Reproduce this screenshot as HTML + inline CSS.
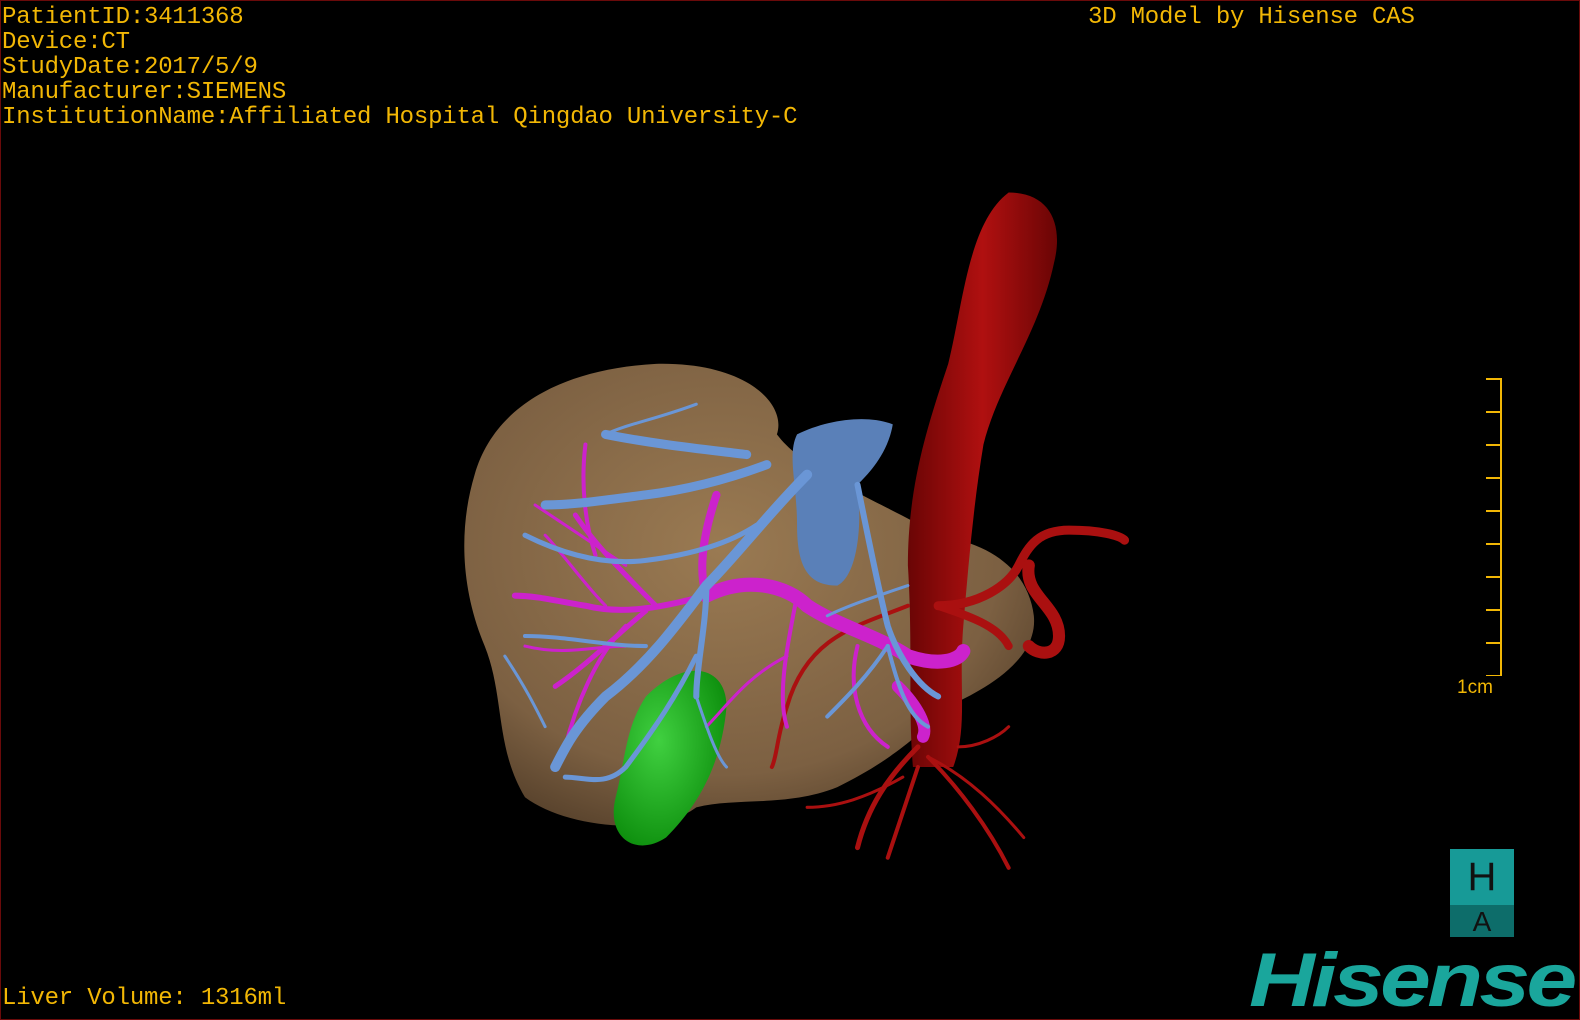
<!DOCTYPE html>
<html><head><meta charset="utf-8"><style>
html,body{margin:0;padding:0;background:#000;}
#f{position:relative;width:1580px;height:1020px;overflow:hidden;background:#000;box-sizing:border-box;border:1px solid #6a0a0a;}
.t{position:absolute;font-family:"Liberation Mono",monospace;font-size:24px;color:#f2b705;white-space:pre;line-height:25px;letter-spacing:-0.2px;}
svg{position:absolute;left:0;top:0;}
</style></head><body><div id="f">
<svg width="1580" height="1020" viewBox="0 0 1568 1012" preserveAspectRatio="none">
<defs>
<radialGradient id="lv" cx="0.45" cy="0.4" r="0.7"><stop offset="0" stop-color="#9a7a52"/><stop offset="0.7" stop-color="#7c6042"/><stop offset="1" stop-color="#4e3a26"/></radialGradient>
<linearGradient id="ao" x1="0" x2="1"><stop offset="0" stop-color="#6a0505"/><stop offset="0.5" stop-color="#b01010"/><stop offset="1" stop-color="#6a0505"/></linearGradient>
<radialGradient id="gb" cx="0.4" cy="0.4" r="0.7"><stop offset="0" stop-color="#40d040"/><stop offset="1" stop-color="#0a8a0a"/></radialGradient>
</defs>
<path d="M470 470 C490 400 560 365 650 360 C740 358 780 400 770 430 C800 470 880 500 930 530 C990 540 1020 570 1025 610 C1030 660 960 690 940 700 C900 740 870 760 830 780 C780 800 730 790 690 800 C650 830 560 820 520 790 C490 740 500 690 480 640 C455 580 455 520 470 470Z" fill="url(#lv)"/>
<path d="M1000 190 C1040 190 1055 220 1045 260 C1030 330 990 380 975 440 C965 500 960 560 955 620 C950 680 960 720 945 760 L905 760 C900 700 905 640 900 560 C900 480 920 420 940 360 C955 300 960 220 1000 190Z" fill="url(#ao)"/>
<g fill="none" stroke="#aa1010" stroke-linecap="round">
<path d="M930 600 C970 600 1000 580 1010 560 C1020 540 1030 525 1060 525 C1090 525 1110 530 1115 535" stroke-width="9"/>
<path d="M1020 560 C1015 590 1050 600 1050 630 C1050 650 1030 650 1020 640" stroke-width="12"/>
<path d="M930 600 C960 610 990 620 1000 640" stroke-width="8"/>
<path d="M910 740 C880 770 860 800 850 840" stroke-width="5"/>
<path d="M910 760 C900 790 890 820 880 850" stroke-width="4"/>
<path d="M920 750 C950 780 980 820 1000 860" stroke-width="4"/>
<path d="M920 750 C960 770 990 800 1015 830" stroke-width="3"/>
<path d="M895 770 C860 790 830 800 800 800" stroke-width="3"/>
<path d="M900 600 C850 620 800 630 780 700 C770 730 770 750 765 760" stroke-width="4"/>
<path d="M950 740 C970 740 990 730 1000 720" stroke-width="3"/>
</g>
<path d="M640 690 C680 650 720 660 720 700 C715 760 690 800 660 830 C630 850 600 830 610 790 C620 750 620 720 640 690Z" fill="url(#gb)"/>
<g fill="none" stroke="#cc22cc" stroke-linecap="round">
<path d="M700 590 C740 570 780 580 800 600 C830 620 870 630 900 650 C930 660 950 655 955 645" stroke-width="14"/>
<path d="M890 680 C910 700 920 720 915 730" stroke-width="12"/>
<path d="M700 590 C660 600 620 610 580 600 C550 595 530 590 510 590" stroke-width="6"/>
<path d="M700 590 C690 560 700 520 710 490" stroke-width="8"/>
<path d="M650 600 C620 570 590 540 570 510" stroke-width="5"/>
<path d="M640 605 C610 630 580 660 550 680" stroke-width="5"/>
<path d="M600 600 C580 580 555 545 540 530" stroke-width="3"/>
<path d="M620 620 C590 650 570 700 560 740" stroke-width="4"/>
<path d="M580 440 C575 480 580 520 590 550" stroke-width="4"/>
<path d="M530 500 C560 520 590 540 620 560" stroke-width="3"/>
<path d="M520 640 C560 650 590 640 620 640" stroke-width="3"/>
<path d="M790 590 C780 640 770 690 780 720" stroke-width="4"/>
<path d="M780 650 C740 670 720 700 700 720" stroke-width="3"/>
<path d="M850 640 C840 680 850 720 880 740" stroke-width="4"/>
</g>
<path d="M790 430 C820 415 860 410 885 420 C880 450 860 470 850 480 C855 520 850 570 830 580 C800 580 790 560 790 520 C790 480 780 450 790 430Z" fill="#5a80b8"/>
<g fill="none" stroke="#6a96d6" stroke-linecap="round">
<path d="M800 470 C760 510 730 550 700 580 C670 620 640 660 600 690 C570 720 560 740 550 760" stroke-width="10"/>
<path d="M760 460 C720 475 680 485 640 490 C600 495 570 500 540 500" stroke-width="9"/>
<path d="M740 450 C700 445 650 440 600 430" stroke-width="9"/>
<path d="M750 520 C720 540 680 550 640 555 C600 560 560 550 520 530" stroke-width="5"/>
<path d="M700 580 C700 620 690 660 690 690" stroke-width="6"/>
<path d="M690 650 C670 690 650 720 620 760 C600 780 580 770 560 770" stroke-width="5"/>
<path d="M640 640 C600 640 560 630 520 630" stroke-width="4"/>
<path d="M850 480 C860 530 870 580 880 620 C890 650 910 680 930 690" stroke-width="6"/>
<path d="M880 640 C860 670 840 690 820 710" stroke-width="4"/>
<path d="M880 640 C890 680 900 710 920 720" stroke-width="4"/>
<path d="M820 610 C840 600 870 590 900 580" stroke-width="3"/>
<path d="M690 690 C700 720 710 750 720 760" stroke-width="3"/>
<path d="M600 430 C620 420 650 415 690 400" stroke-width="3"/>
<path d="M500 650 C520 680 530 700 540 720" stroke-width="3"/>
</g>
</svg>
<div class="t" style="left:1px;top:4px">PatientID:3411368
Device:CT
StudyDate:2017/5/9
Manufacturer:SIEMENS
InstitutionName:Affiliated Hospital Qingdao University-C</div>
<div class="t" style="left:1087px;top:4px">3D Model by Hisense CAS</div>
<div class="t" style="left:1px;top:985px">Liver Volume: 1316ml</div>
<div style="position:absolute;left:1499px;top:377px;width:2px;height:298px;background:#f2b705"></div>
<div style="position:absolute;left:1485px;top:377px;width:15px;height:298px;background:repeating-linear-gradient(to bottom,#f2b705 0 2px,transparent 2px 33px)"></div>
<div style="position:absolute;left:1456px;top:676px;font-family:'Liberation Sans',sans-serif;font-size:19px;color:#f2b705;">1cm</div>
<div style="position:absolute;left:1449px;top:848px;width:64px;height:56px;background:#179a97;color:#111;font:40px 'Liberation Sans',sans-serif;text-align:center;line-height:56px">H</div>
<div style="position:absolute;left:1449px;top:904px;width:64px;height:32px;background:#0d6d6a;color:#111;font:28px 'Liberation Sans',sans-serif;text-align:center;line-height:34px">A</div>
<div style="position:absolute;left:1248px;top:935px;font:italic bold 76px 'Liberation Sans',sans-serif;color:#1aa69c;letter-spacing:-3px;line-height:90px;transform:scaleX(1.2);transform-origin:0 0">Hisense</div>
</div></body></html>
